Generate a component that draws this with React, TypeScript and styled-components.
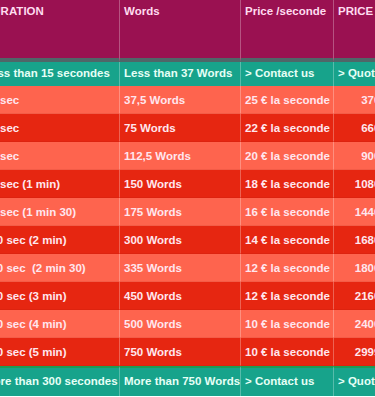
import styled, { createGlobalStyle } from "styled-components";

const GlobalStyle = createGlobalStyle`
  html, body {
    margin: 0;
    padding: 0;
    background: #ffffff;
  }
  body {
    font-family: "Liberation Sans", Arial, Helvetica, sans-serif;
  }
`;

// Colours taken from the screenshot
const HEAD = "#9a1151";
const TEAL = "#17a38b";
const LIGHT = "#fe644e";
const DARK = "#e62611";
const INK = "#ffe6ee";

type Tone = "light" | "dark";

type RowData = {
  duration: string;
  words: string;
  perSec: string;
  price: string;
};

const rows: RowData[] = [
  { duration: "15 sec", words: "37,5 Words", perSec: "25 € la seconde", price: "370 €" },
  { duration: "30 sec", words: "75 Words", perSec: "22 € la seconde", price: "660 €" },
  { duration: "45 sec", words: "112,5 Words", perSec: "20 € la seconde", price: "900 €" },
  { duration: "60 sec (1 min)", words: "150 Words", perSec: "18 € la seconde", price: "1080 €" },
  { duration: "90 sec (1 min 30)", words: "175 Words", perSec: "16 € la seconde", price: "1440 €" },
  { duration: "120 sec (2 min)", words: "300 Words", perSec: "14 € la seconde", price: "1680 €" },
  { duration: "150 sec \u00a0(2 min 30)", words: "335 Words", perSec: "12 € la seconde", price: "1800 €" },
  { duration: "180 sec (3 min)", words: "450 Words", perSec: "12 € la seconde", price: "2160 €" },
  { duration: "240 sec (4 min)", words: "500 Words", perSec: "10 € la seconde", price: "2400 €" },
  { duration: "300 sec (5 min)", words: "750 Words", perSec: "10 € la seconde", price: "2999 €" },
];

// The table is wider than the window; the view is scrolled a little to the right.
const Viewport = styled.div`
  width: 375px;
  height: 397px;
  overflow: hidden;
`;

const Table = styled.table`
  margin-left: -20px;
  width: 415px;
  table-layout: fixed;
  border-collapse: separate;
  border-spacing: 0;
  font-size: 11.5px;
  font-weight: bold;
  color: ${INK};
  white-space: nowrap;
`;

const HeadCell = styled.th`
  height: 62px;
  padding: 5px 4px 0;
  box-sizing: border-box;
  vertical-align: top;
  text-align: left;
  font-weight: bold;
  background: ${HEAD};
  color: #ffdcef;
  border-right: 1px solid rgba(255, 255, 255, 0.28);
  border-bottom: 4px solid #4f6668;
`;

const BodyRow = styled.tr<{ $tone: Tone }>`
  background: ${({ $tone }) => ($tone === "light" ? LIGHT : DARK)};
`;

const Cell = styled.td<{ $right?: boolean }>`
  height: 28px;
  padding: 0 4px;
  box-sizing: border-box;
  overflow: hidden;
  text-align: ${({ $right }) => ($right ? "right" : "left")};
  border-right: 1px solid rgba(255, 255, 255, 0.28);
  border-bottom: 1px solid rgba(120, 0, 0, 0.08);
`;

const TealCell = styled.td<{ $bottom?: boolean }>`
  height: ${({ $bottom }) => ($bottom ? 30 : 24)}px;
  padding: 0 4px 3px;
  box-sizing: border-box;
  overflow: hidden;
  background: ${TEAL};
  color: #e6fff6;
  border-right: 1px solid rgba(255, 255, 255, 0.28);
  border-top: ${({ $bottom }) => ($bottom ? "2px solid #1f9a55" : "none")};
`;

export default function App() {
  return (
    <>
      <GlobalStyle />
      <Viewport>
        <Table>
          <colgroup>
            <col style={{ width: 140 }} />
            <col style={{ width: 121 }} />
            <col style={{ width: 93 }} />
            <col style={{ width: 61 }} />
          </colgroup>
          <thead>
            <tr>
              <HeadCell>DURATION</HeadCell>
              <HeadCell>Words</HeadCell>
              <HeadCell>Price /seconde</HeadCell>
              <HeadCell>PRICE</HeadCell>
            </tr>
          </thead>
          <tbody>
            <tr>
              <TealCell>Less than 15 secondes</TealCell>
              <TealCell>Less than 37 Words</TealCell>
              <TealCell>&gt; Contact us</TealCell>
              <TealCell>&gt; Quote</TealCell>
            </tr>
            {rows.map((r, i) => (
              <BodyRow key={r.words} $tone={i % 2 === 0 ? "light" : "dark"}>
                <Cell>{r.duration}</Cell>
                <Cell>{r.words}</Cell>
                <Cell>{r.perSec}</Cell>
                <Cell $right>{r.price}</Cell>
              </BodyRow>
            ))}
            <tr>
              <TealCell $bottom>More than 300 secondes</TealCell>
              <TealCell $bottom>More than 750 Words</TealCell>
              <TealCell $bottom>&gt; Contact us</TealCell>
              <TealCell $bottom>&gt; Quote</TealCell>
            </tr>
          </tbody>
        </Table>
      </Viewport>
    </>
  );
}
